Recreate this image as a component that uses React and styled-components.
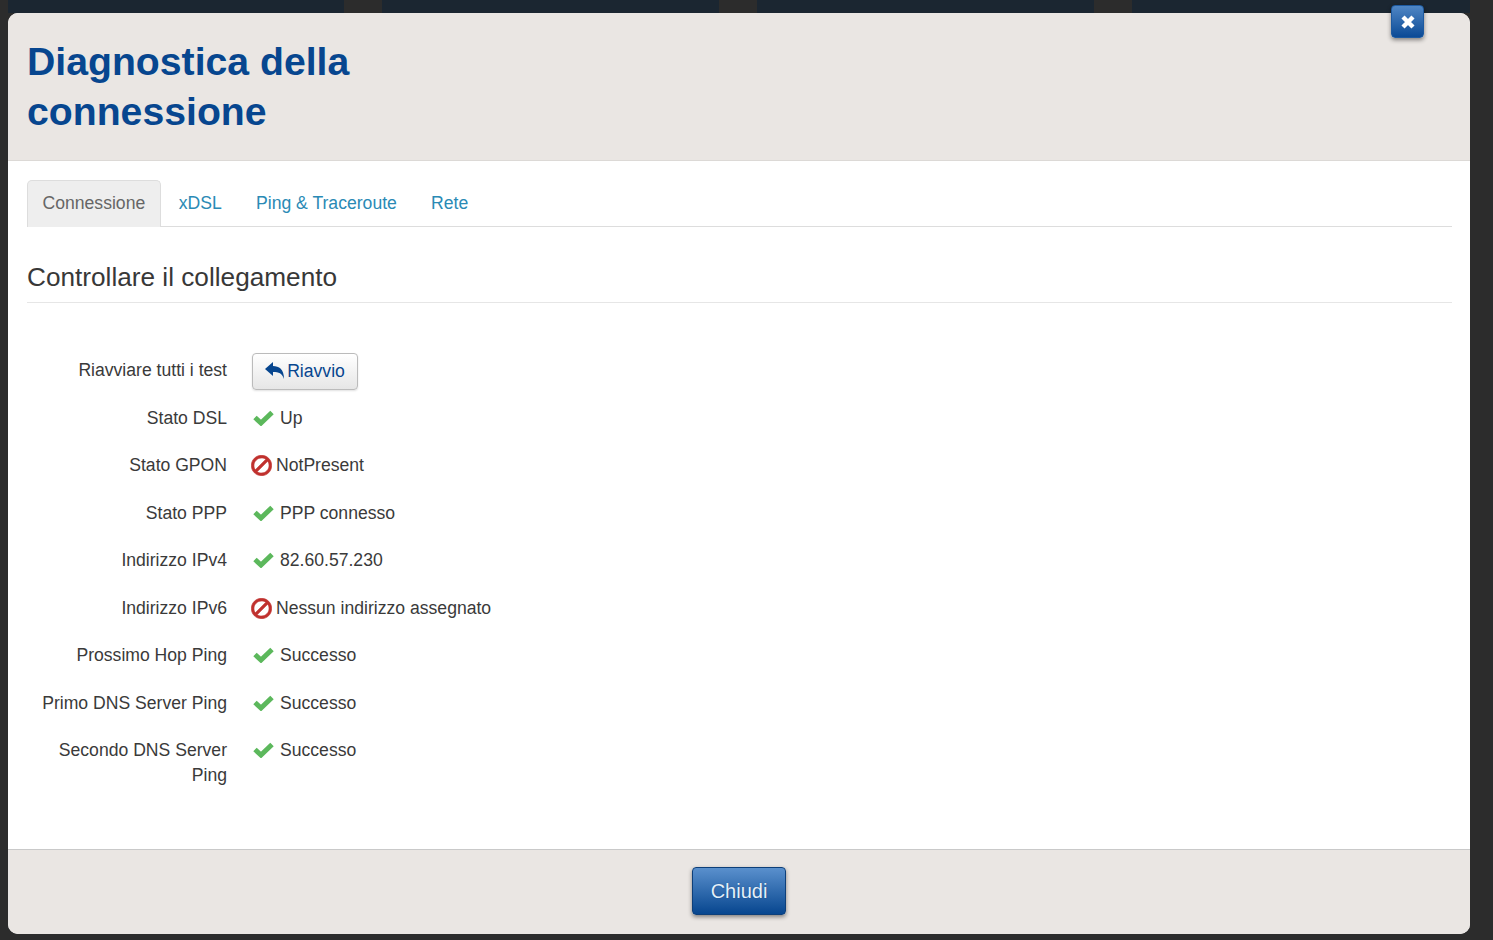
import styled, { createGlobalStyle } from 'styled-components'
import { FaBan } from 'react-icons/fa'

const GlobalStyle = createGlobalStyle`
  html, body {
    margin: 0;
    padding: 0;
    background: #2c2c2c;
  }
  body {
    font-family: "Liberation Sans", Arial, sans-serif;
    color: #333;
  }
`

const Page = styled.div`
  width: 1493px;
  height: 940px;
  overflow: hidden;
  background: #2c2c2c;
`

const Behind = styled.div`
  display: flex;
  gap: 38px;
  height: 13px;
  padding-left: 8px;
  width: 1462px;
`

const BehindCard = styled.div`
  flex: 0 0 ${(p) => p.$w}px;
  background: #1b2631;
`

const Modal = styled.div`
  position: relative;
  margin-left: 8px;
  width: 1462px;
  height: 921px;
  display: flex;
  flex-direction: column;
  background: #fff;
  border-radius: 10px;
`

const Header = styled.div`
  height: 148px;
  flex: none;
  box-sizing: border-box;
  padding: 24px 19px 0;
  background: #eae6e3;
  border-bottom: 1px solid #dcd9d6;
  border-radius: 10px 10px 0 0;
`

const Title = styled.h1`
  margin: 0;
  width: 400px;
  font-size: 39.2px;
  line-height: 50px;
  font-weight: 700;
  color: #07468f;
`

const CloseButton = styled.button`
  position: absolute;
  top: -8px;
  right: 46px;
  width: 33px;
  height: 33px;
  padding: 0;
  display: flex;
  align-items: center;
  justify-content: center;
  border: 1px solid #1d5aa0;
  border-radius: 4px;
  background: linear-gradient(#4f86c4, #0b4a96);
  box-shadow: 0 2px 4px rgba(0, 0, 0, 0.45);
`

const CloseGlyph = styled.svg`
  width: 14px;
  height: 14px;
`

const Body = styled.div`
  flex: 1;
  padding: 19px 18px 0 19px;
`

const Tabs = styled.div`
  display: flex;
  height: 47px;
  box-sizing: border-box;
  border-bottom: 1px solid #ddd;
`

const Tab = styled.div`
  height: 47px;
  box-sizing: border-box;
  margin-right: ${(p) => (p.$active ? '1px' : '0')};
  padding: 0 ${(p) => (p.$active ? '14.5px' : '16.1px')};
  line-height: 45px;
  font-size: 17.6px;
  color: ${(p) => (p.$active ? '#666' : '#2a8ab5')};
  background: ${(p) => (p.$active ? '#eee' : 'transparent')};
  border: 1px solid ${(p) => (p.$active ? '#ddd' : 'transparent')};
  border-bottom: 0;
  border-radius: 5px 5px 0 0;
`

const Section = styled.h2`
  margin: 34px 0 50px;
  height: 41px;
  font-size: 26.2px;
  line-height: 32px;
  font-weight: 400;
  color: #383838;
  border-bottom: 1px solid #e6e6e6;
`

const Row = styled.div`
  display: grid;
  grid-template-columns: 200px 1fr;
  column-gap: 25px;
  min-height: ${(p) => (p.$button ? 52.5 : 47.5)}px;
  font-size: 17.6px;
  line-height: 25px;
`

const Label = styled.div`
  text-align: right;
  color: #3a3a3a;
  padding-top: ${(p) => (p.$button ? '5px' : '0')};
`

const Value = styled.div`
  display: flex;
  align-items: flex-start;
  color: #3a3a3a;
`

const CheckGlyph = styled.svg`
  flex: none;
  width: 21px;
  height: 16px;
  margin: 4px 6px 0 1px;
  color: #5cb85c;
`

const BanIcon = styled(FaBan)`
  flex: none;
  width: 21px;
  height: 21px;
  margin: 2px 4px 0 -1px;
  color: #c0312e;
  transform: scaleX(-1);
  stroke: currentColor;
  stroke-width: 16px;
`

const RestartButton = styled.button`
  width: 106px;
  height: 37px;
  padding: 0;
  display: flex;
  align-items: center;
  justify-content: center;
  gap: 3px;
  font: inherit;
  color: #07468f;
  border: 1px solid #bbb;
  border-radius: 4px;
  background: linear-gradient(#fff, #e6e6e6);
  box-shadow: 0 1px 2px rgba(0, 0, 0, 0.12);
`

const ReplyGlyph = styled.svg`
  width: 19px;
  height: 17px;
  margin-top: -2px;
`

const Footer = styled.div`
  height: 85px;
  flex: none;
  box-sizing: border-box;
  display: flex;
  justify-content: center;
  padding-top: 17px;
  background: #eae6e3;
  border-top: 1px solid #c9c9c9;
  border-radius: 0 0 10px 10px;
`

const CloseFooterButton = styled.button`
  width: 94px;
  height: 48px;
  padding: 0;
  font-family: inherit;
  font-size: 20px;
  color: #e4f1fb;
  text-shadow: 0 0 1px rgba(6, 50, 105, 0.8);
  border: 1px solid #0d3f7a;
  border-radius: 4px;
  background: linear-gradient(#5a90cd, #07468f);
  box-shadow: 0 2px 4px rgba(0, 0, 0, 0.45);
`

function CheckIcon() {
  return (
    <CheckGlyph viewBox="0 0 21 16">
      <polyline points="2,7.5 8,13 19,2.5" fill="none" stroke="currentColor" strokeWidth="5" />
    </CheckGlyph>
  )
}

function ReplyIcon() {
  return (
    <ReplyGlyph viewBox="0 0 19 17">
      <path d="M0 7 L8 0 V4 C14 4 19 7 19 17 C17 11 14 10 8 10 V14 Z" fill="currentColor" />
    </ReplyGlyph>
  )
}

function CloseIcon() {
  return (
    <CloseGlyph viewBox="0 0 14 14">
      <path d="M2 2 L12 12 M12 2 L2 12" stroke="#fff" strokeWidth="4.4" fill="none" />
    </CloseGlyph>
  )
}

const rows = [
  { label: 'Stato DSL', value: 'Up', ok: true },
  { label: 'Stato GPON', value: 'NotPresent' },
  { label: 'Stato PPP', value: 'PPP connesso', ok: true },
  { label: 'Indirizzo IPv4', value: '82.60.57.230', ok: true },
  { label: 'Indirizzo IPv6', value: 'Nessun indirizzo assegnato' },
  { label: 'Prossimo Hop Ping', value: 'Successo', ok: true },
  { label: 'Primo DNS Server Ping', value: 'Successo', ok: true },
  { label: 'Secondo DNS Server Ping', value: 'Successo', ok: true },
]

export default function App() {
  return (
    <Page>
      <GlobalStyle />
      <Behind>
        <BehindCard $w={336} />
        <BehindCard $w={337} />
        <BehindCard $w={337} />
        <BehindCard $w={338} />
      </Behind>
      <Modal>
        <Header>
          <Title>Diagnostica della connessione</Title>
        </Header>
        <CloseButton>
          <CloseIcon />
        </CloseButton>
        <Body>
          <Tabs>
            <Tab $active>Connessione</Tab>
            <Tab>xDSL</Tab>
            <Tab>Ping &amp; Traceroute</Tab>
            <Tab>Rete</Tab>
          </Tabs>
          <Section>Controllare il collegamento</Section>
          <Row $button>
            <Label $button>Riavviare tutti i test</Label>
            <Value>
              <RestartButton>
                <ReplyIcon />
                Riavvio
              </RestartButton>
            </Value>
          </Row>
          {rows.map((r) => (
            <Row key={r.label}>
              <Label>{r.label}</Label>
              <Value>
                {r.ok ? <CheckIcon /> : <BanIcon />}
                {r.value}
              </Value>
            </Row>
          ))}
        </Body>
        <Footer>
          <CloseFooterButton>Chiudi</CloseFooterButton>
        </Footer>
      </Modal>
    </Page>
  )
}
